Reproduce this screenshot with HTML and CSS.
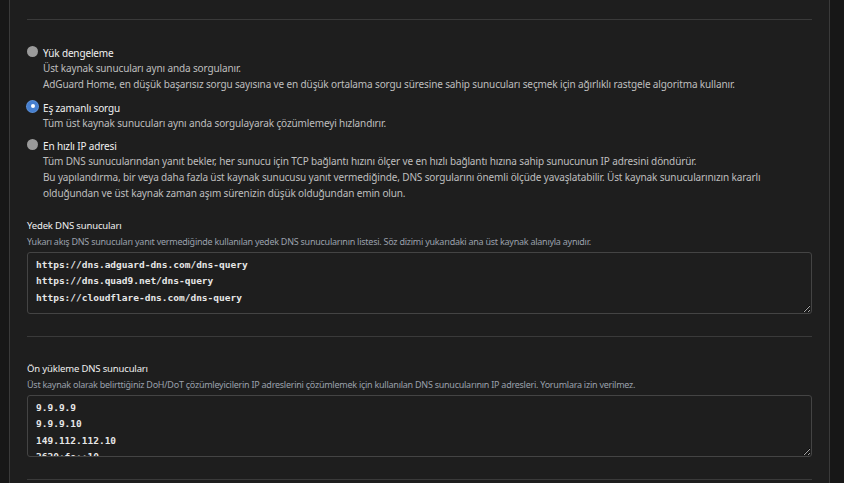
FILE: index.html
```html
<!DOCTYPE html>
<html lang="tr">
<head>
<meta charset="utf-8">
<title>DNS ayarları</title>
<link rel="stylesheet" href="styles.css">
</head>
<body>
<div class="page">
  <div class="card">
    <hr class="sep sep-top">
    <div class="radios">
      <div class="radio-row">
        <span class="radio"></span>
        <div class="radio-text">
          <div class="radio-label">Yük dengeleme</div>
          <div class="radio-desc">Üst kaynak sunucuları aynı anda sorgulanır.</div>
          <div class="radio-desc">AdGuard Home, en düşük başarısız sorgu sayısına ve en düşük ortalama sorgu süresine sahip sunucuları seçmek için ağırlıklı rastgele algoritma kullanır.</div>
        </div>
      </div>
      <div class="radio-row">
        <span class="radio checked"></span>
        <div class="radio-text">
          <div class="radio-label">Eş zamanlı sorgu</div>
          <div class="radio-desc">Tüm üst kaynak sunucuları aynı anda sorgulayarak çözümlemeyi hızlandırır.</div>
        </div>
      </div>
      <div class="radio-row">
        <span class="radio"></span>
        <div class="radio-text">
          <div class="radio-label">En hızlı IP adresi</div>
          <div class="radio-desc">Tüm DNS sunucularından yanıt bekler, her sunucu için TCP bağlantı hızını ölçer ve en hızlı bağlantı hızına sahip sunucunun IP adresini döndürür.</div>
          <div class="radio-desc">Bu yapılandırma, bir veya daha fazla üst kaynak sunucusu yanıt vermediğinde, DNS sorgularını önemli ölçüde yavaşlatabilir. Üst kaynak sunucularınızın kararlı olduğundan ve üst kaynak zaman aşım sürenizin düşük olduğundan emin olun.</div>
        </div>
      </div>
    </div>

    <div class="field first-field">
      <div class="field-title">Yedek DNS sunucuları</div>
      <div class="field-desc">Yukarı akış DNS sunucuları yanıt vermediğinde kullanılan yedek DNS sunucularının listesi. Söz dizimi yukarıdaki ana üst kaynak alanıyla aynıdır.</div>
      <textarea class="code-area" spellcheck="false">https://dns.adguard-dns.com/dns-query
https://dns.quad9.net/dns-query
https://cloudflare-dns.com/dns-query</textarea>
    </div>
    <hr class="sep sep-mid">

    <div class="field second-field">
      <div class="field-title">Ön yükleme DNS sunucuları</div>
      <div class="field-desc">Üst kaynak olarak belirttiğiniz DoH/DoT çözümleyicilerin IP adreslerini çözümlemek için kullanılan DNS sunucularının IP adresleri. Yorumlara izin verilmez.</div>
      <textarea class="code-area" spellcheck="false">9.9.9.9
9.9.9.10
149.112.112.10
2620:fe::10
2620:fe::fe:10</textarea>
    </div>
    <hr class="sep sep-bottom">
  </div>
</div>
</body>
</html>
```

FILE: styles.css
```css
* { box-sizing: border-box; }
html, body { margin: 0; padding: 0; }
body {
  background: #171717;
  font-family: "Noto Sans", "Open Sans", sans-serif;
  color: #e3e3e3;
  height: 483px;
  overflow: hidden;
}
.page {
  padding-left: 9px;
  width: 830px;
}
.card {
  background: #1e1e1e;
  border-left: 1px solid #3a3a3a;
  border-right: 1px solid #3a3a3a;
  padding: 19px 17px 0 17px;
  min-height: 483px;
}
.sep {
  border: 0;
  border-top: 1px solid #3a3a3a;
  margin: 0;
  height: 0;
}
.radios {
  margin-top: 25px;
  display: flex;
  flex-direction: column;
  gap: 7px;
}
.radio-row {
  display: flex;
  align-items: flex-start;
  gap: 5px;
}
.radio {
  flex: none;
  width: 11px;
  height: 11px;
  border-radius: 50%;
  background: #9b9b9b;
  margin-top: 1px;
  position: relative;
}
.radio.checked {
  background: #467fcf;
  box-shadow: 0 0 0 1px #5b8fd6;
}
.radio.checked::after {
  content: "";
  position: absolute;
  left: 3.5px;
  top: 3.5px;
  width: 4px;
  height: 4px;
  border-radius: 50%;
  background: #fff;
}
.radio-label {
  font-size: 10px;
  line-height: 16px;
  letter-spacing: -0.15px;
  color: #f0f0f0;
}
.radio-desc {
  font-size: 10px;
  line-height: 15.75px;
  letter-spacing: -0.13px;
  color: #bfbfbf;
}
.field-title {
  font-size: 9.5px;
  line-height: 16px;
  letter-spacing: -0.15px;
  color: #f0f0f0;
}
.field-desc {
  font-size: 9px;
  line-height: 16px;
  letter-spacing: -0.25px;
  color: #9aa0ac;
}
.first-field { margin-top: 16px; }
.second-field { margin-top: 24px; }
.code-area {
  display: block;
  width: 100%;
  height: 62px;
  margin-top: 2px;
  background: #1e1e1e;
  border: 1px solid #444;
  border-radius: 3px;
  color: #e6e6e6;
  font-family: "DejaVu Sans Mono", monospace;
  font-size: 9.5px;
  font-weight: bold;
  line-height: 16.5px;
  padding: 4px 8px;
  resize: vertical;
  overflow: hidden;
  outline: none;
}
.sep-mid { margin-top: 22px; }
.sep-bottom { margin-top: 22px; }
```
